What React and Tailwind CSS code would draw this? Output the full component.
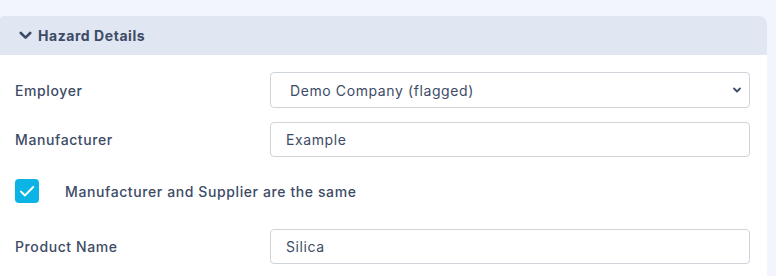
import React from "react";

function Field({ label, children }) {
  return (
    <div className="flex items-center">
      <div className="w-[255px] text-[14px] font-medium tracking-[0.6px] text-[#3d4b66]">{label}</div>
      <div className="w-[480px]">{children}</div>
    </div>
  );
}

export default function App() {
  return (
    <div className="min-h-screen bg-[#f2f5fd] pt-4 pr-[9px] font-['Inter',sans-serif]">
      <div className="bg-white rounded-tr-lg rounded-tl-sm overflow-hidden h-[260px]">
        <div className="h-[39px] bg-[#e0e6f2] flex items-center pl-[19px] gap-[6px] text-[#3d4b66]">
          <svg width="13" height="13" viewBox="0 0 13 13" fill="none" className="shrink-0">
            <path d="M1.8 4l4.7 4.6L11.2 4" stroke="currentColor" strokeWidth="2.6" strokeLinecap="round" strokeLinejoin="round" />
          </svg>
          <span className="text-[14px] font-bold tracking-[0.55px]">Hazard Details</span>
        </div>
        <div className="pl-[15px] pt-[17px] flex flex-col">
          <Field label="Employer">
            <div className="h-[36px] border border-[#ced4da] rounded-[4px] flex items-center justify-between pl-[19px] pr-[7px] text-[14px] tracking-[0.6px] text-[#3d4b66]">
              <span>Demo Company (flagged)</span>
              <svg width="10" height="10" viewBox="0 0 10 10" fill="none">
                <path d="M2 3.5l3 3 3-3" stroke="#3d4b66" strokeWidth="1.8" strokeLinecap="round" strokeLinejoin="round" />
              </svg>
            </div>
          </Field>
          <div className="mt-[14px]">
            <Field label="Manufacturer">
              <div className="h-[35px] border border-[#ced4da] rounded-[4px] flex items-center pl-[15px] text-[14px] tracking-[0.6px] text-[#3d4b66]">
                Example
              </div>
            </Field>
          </div>
          <div className="mt-[22px] flex items-center">
            <div className="w-[24px] h-[24px] shrink-0 rounded-[4px] bg-[#0cb4e6] flex items-center justify-center">
              <svg width="24" height="24" viewBox="0 0 24 24" fill="none" className="shrink-0">
                <path d="M6 12.6l4 3.8L18.2 8" stroke="white" strokeWidth="2" strokeLinecap="round" strokeLinejoin="round" />
              </svg>
            </div>
            <span className="ml-[26px] text-[14px] font-medium tracking-[0.6px] text-[#3d4b66]">Manufacturer and Supplier are the same</span>
          </div>
          <div className="mt-[26px]">
            <Field label="Product Name">
              <div className="h-[35px] border border-[#ced4da] rounded-[4px] flex items-center pl-[15px] text-[14px] tracking-[0.6px] text-[#3d4b66]">
                Silica
              </div>
            </Field>
          </div>
        </div>
      </div>
    </div>
  );
}
